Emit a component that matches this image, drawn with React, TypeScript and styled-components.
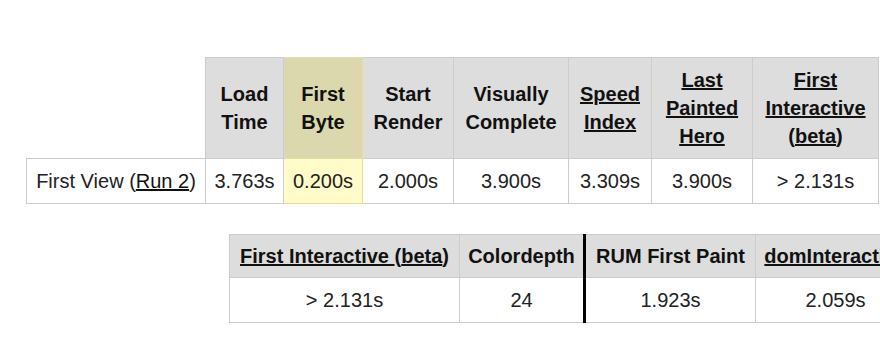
import React from "react";
import styled, { createGlobalStyle, css } from "styled-components";

const GlobalStyle = createGlobalStyle`
  html, body {
    margin: 0;
    padding: 0;
    background: #ffffff;
    overflow: hidden;
  }
  body {
    font-family: "Liberation Sans", Arial, sans-serif;
    color: #222222;
  }
`;

const Page = styled.div`
  display: flex;
  flex-direction: column;
  align-items: flex-start;
  gap: 30px;
  width: 1100px;
  padding: 57px 0 0 26px;
`;

const Table = styled.table<{ $width: number; $indent?: number }>`
  border-collapse: collapse;
  table-layout: fixed;
  width: ${(p) => p.$width}px;
  margin-left: ${(p) => p.$indent ?? 0}px;
  font-size: 20px;
  line-height: 28px;
`;

const splitEdge = css`
  border-left: 3px solid #000000;
`;

const Corner = styled.th<{ $w: number }>`
  box-sizing: border-box;
  width: ${(p) => p.$w}px;
  padding: 0;
  border: none;
  background: transparent;
`;

const Head = styled.th<{ $w: number; $hl?: boolean; $split?: boolean; $slim?: boolean }>`
  box-sizing: border-box;
  width: ${(p) => p.$w}px;
  padding: ${(p) => (p.$slim ? "7px 8px" : "8px")};
  background: ${(p) => (p.$hl ? "#dbd8ad" : "#dddddd")};
  border: 1px solid ${(p) => (p.$hl ? "#e2dea4" : "#cccccc")};
  color: #111111;
  font-weight: bold;
  text-align: center;
  vertical-align: middle;
  white-space: nowrap;
  ${(p) => p.$split && splitEdge}
`;

const Cell = styled.td<{ $hl?: boolean; $split?: boolean }>`
  padding: 8px;
  background: ${(p) => (p.$hl ? "#fffcc9" : "#ffffff")};
  border: 1px solid ${(p) => (p.$hl ? "#e2dea4" : "#cccccc")};
  text-align: center;
  vertical-align: middle;
  white-space: nowrap;
  ${(p) => p.$split && splitEdge}
`;

const Link = styled.a`
  color: #111111;
  text-decoration: underline;
  cursor: pointer;
`;

const summary = [
  { label: "Load Time", w: 78 },
  { label: "First Byte", w: 79, hl: true },
  { label: "Start Render", w: 91 },
  { label: "Visually Complete", w: 115 },
];

export default function App() {
  return (
    <>
      <GlobalStyle />
      <Page>
        <Table $width={852}>
          <thead>
            <tr>
              <Corner $w={179} />
              {summary.map((c) => (
                <Head key={c.label} $w={c.w} $hl={c.hl}>
                  {c.label.split(" ")[0]}
                  <br />
                  {c.label.split(" ")[1]}
                </Head>
              ))}
              <Head $w={83}>
                <Link>Speed</Link>
                <br />
                <Link>Index</Link>
              </Head>
              <Head $w={101}>
                <Link>Last</Link>
                <br />
                <Link>Painted</Link>
                <br />
                <Link>Hero</Link>
              </Head>
              <Head $w={126}>
                <Link>First</Link>
                <br />
                <Link>Interactive</Link>
                <br />
                (<Link>beta</Link>)
              </Head>
            </tr>
          </thead>
          <tbody>
            <tr>
              <Cell>
                First View (<Link>Run 2</Link>)
              </Cell>
              <Cell>3.763s</Cell>
              <Cell $hl>0.200s</Cell>
              <Cell>2.000s</Cell>
              <Cell>3.900s</Cell>
              <Cell>3.309s</Cell>
              <Cell>3.900s</Cell>
              <Cell>&gt; 2.131s</Cell>
            </tr>
          </tbody>
        </Table>

        <Table $width={686} $indent={203}>
          <thead>
            <tr>
              <Head $w={230} $slim>
                <Link>First Interactive </Link>(<Link>beta</Link>)
              </Head>
              <Head $w={125} $slim>
                Colordepth
              </Head>
              <Head $w={171} $slim $split>
                RUM First Paint
              </Head>
              <Head $w={160} $slim>
                <Link>domInteractive</Link>
              </Head>
            </tr>
          </thead>
          <tbody>
            <tr>
              <Cell>&gt; 2.131s</Cell>
              <Cell>24</Cell>
              <Cell $split>1.923s</Cell>
              <Cell>2.059s</Cell>
            </tr>
          </tbody>
        </Table>
      </Page>
    </>
  );
}
